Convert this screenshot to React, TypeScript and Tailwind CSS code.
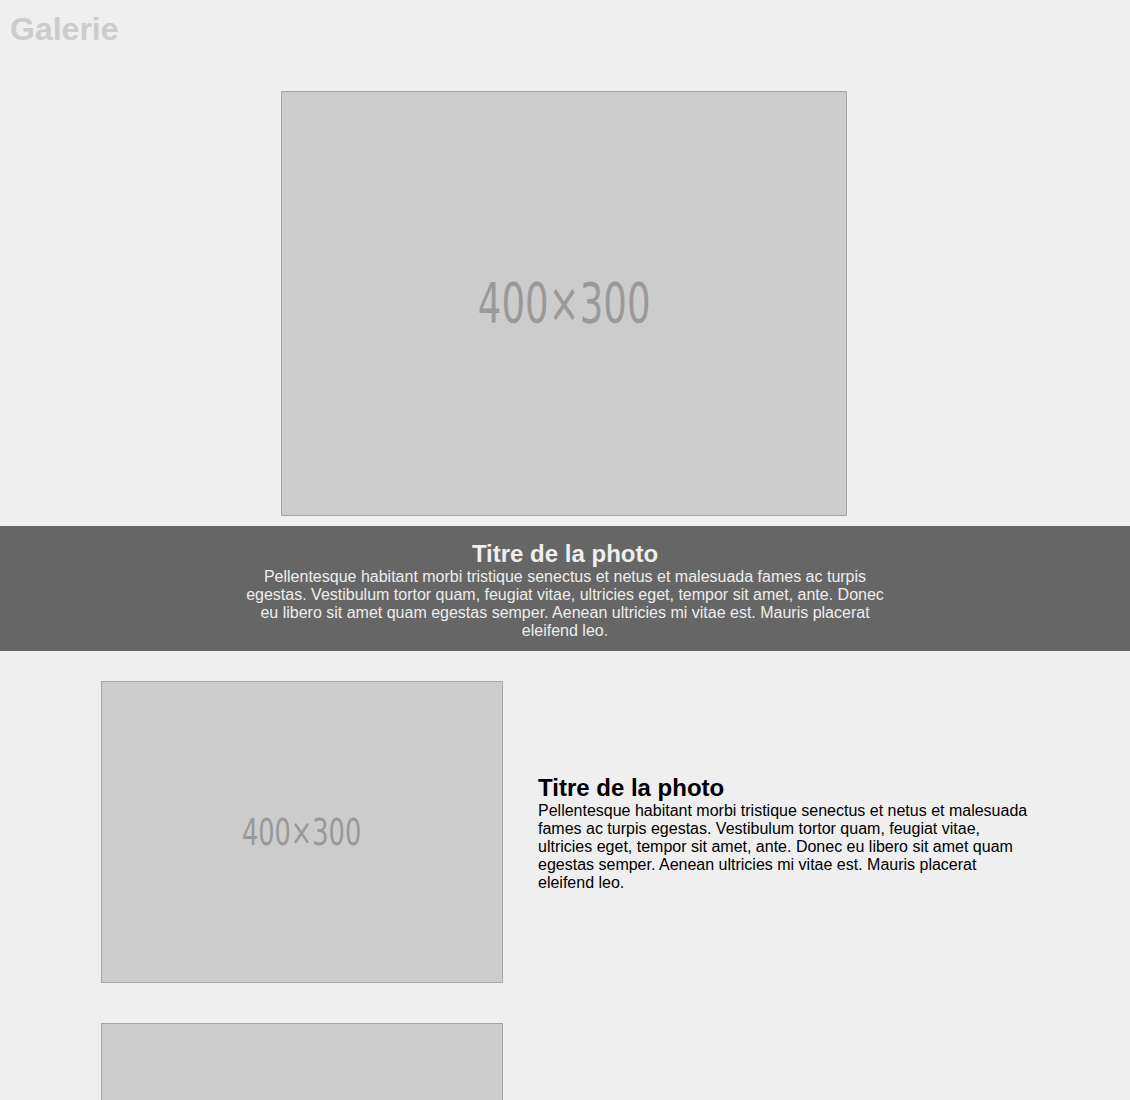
const lorem =
  'Pellentesque habitant morbi tristique senectus et netus et malesuada fames ac turpis egestas. Vestibulum tortor quam, feugiat vitae, ultricies eget, tempor sit amet, ante. Donec eu libero sit amet quam egestas semper. Aenean ultricies mi vitae est. Mauris placerat eleifend leo.'

function Placeholder({ big }: { big?: boolean }) {
  return (
    <div
      className={
        big
          ? 'flex h-[425px] w-[566px] shrink-0 items-center justify-center border border-[#a6a6a6] bg-[#cccccc]'
          : 'flex h-[302px] w-[402px] shrink-0 items-center justify-center border border-[#a6a6a6] bg-[#cccccc]'
      }
    >
      <span
        className={
          big
            ? 'scale-x-75 text-[55px] leading-none text-[#999999] [font-family:"DejaVu_Sans_Condensed",sans-serif]'
            : 'scale-x-75 text-[38px] leading-none text-[#999999] [font-family:"DejaVu_Sans_Condensed",sans-serif]'
        }
      >
        400×300
      </span>
    </div>
  )
}

function Row() {
  return (
    <div className="flex items-center gap-[35px] pl-[101px]">
      <Placeholder />
      <div className="w-[493px]">
        <h2 className="text-[24px] font-bold leading-[29px] text-black">Titre de la photo</h2>
        <p className="text-[16px] leading-[18px] text-black">{lorem}</p>
      </div>
    </div>
  )
}

export default function App() {
  return (
    <div className="min-h-[1100px] bg-[#efefef] [font-family:'Liberation_Sans',Arial,sans-serif]">
      <header className="px-[10px] pt-[11px]">
        <h1 className="text-[32px] font-bold leading-[37px] text-[#cccccc]">Galerie</h1>
      </header>

      <section className="mt-[43px]">
        <div className="pl-[281px]">
          <Placeholder big />
        </div>
        <div className="mt-[10px] bg-[#666666] pb-[11px] pt-[13px] text-center text-[#eeeeee]">
          <h2 className="text-[24px] font-bold leading-[29px]">Titre de la photo</h2>
          <p className="mx-auto max-w-[650px] text-[16px] leading-[18px]">{lorem}</p>
        </div>
      </section>

      <section className="mt-[30px] flex flex-col gap-[40px] pb-10">
        <Row />
        <Row />
      </section>
    </div>
  )
}
